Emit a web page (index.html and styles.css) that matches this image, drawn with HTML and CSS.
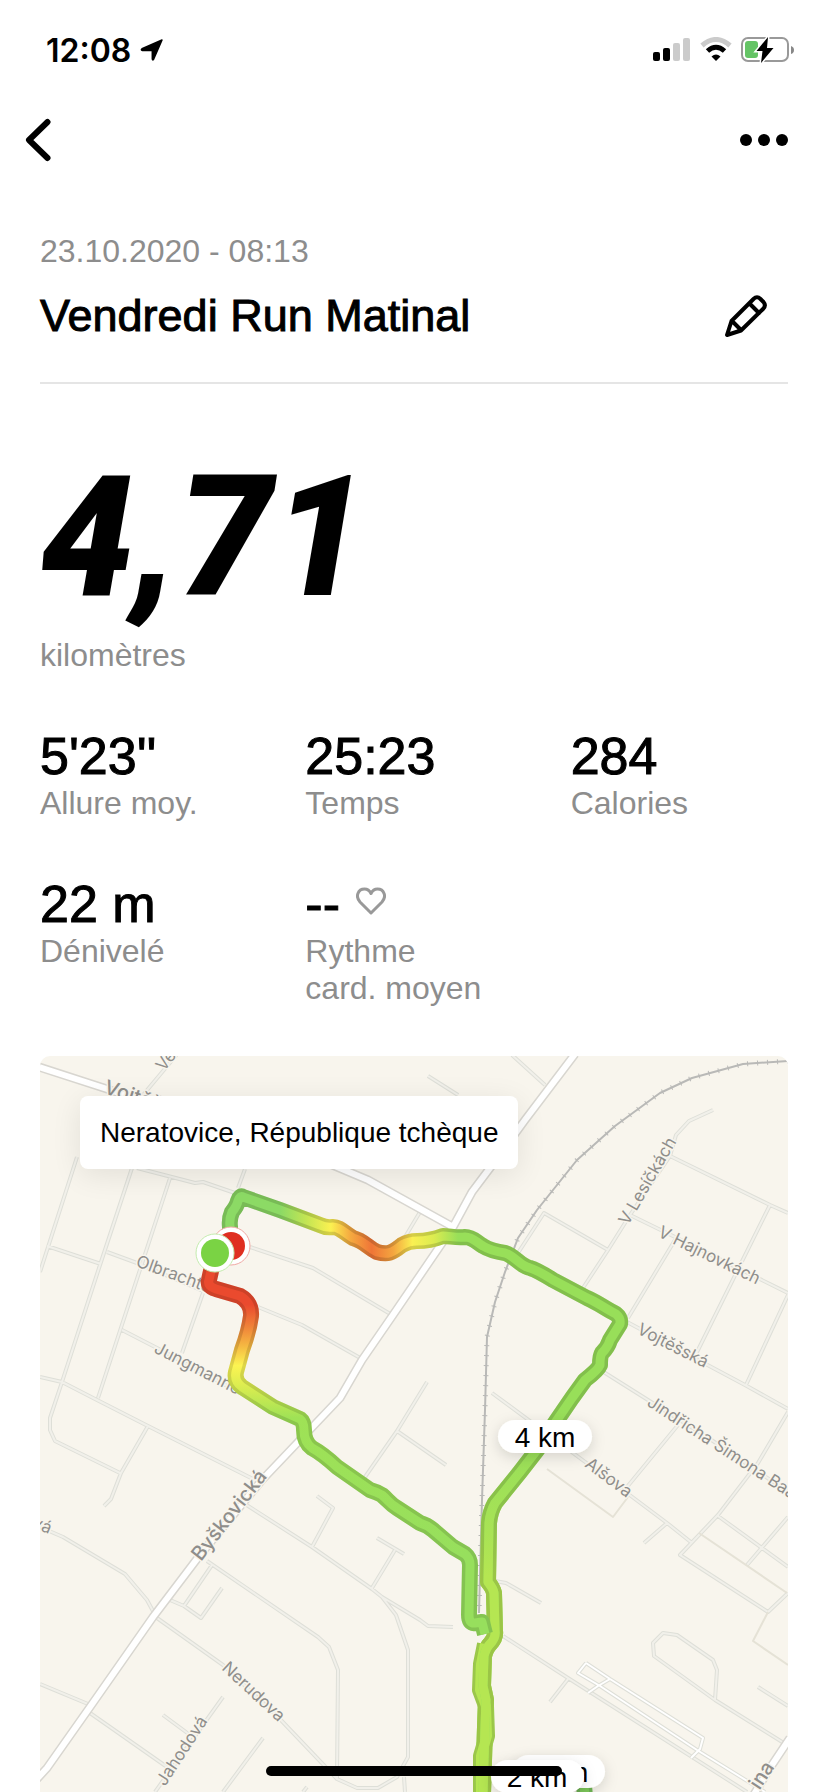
FILE: index.html
```
<!DOCTYPE html>
<html lang="fr">
<head>
    <meta charset="UTF-8">
    <meta name="viewport" content="width=device-width, initial-scale=1.0">
    <title>Vendredi Run Matinal</title>
    <link rel="stylesheet" href="styles.css">
</head>
<body>
    <div class="status-bar">
        <div class="status-time">
            <span>12:08</span>
            <svg width="24" height="22" viewBox="0 0 24 22" stroke="#000" stroke-width="1.500" stroke-linejoin="round"><path d="M22 1 13.500 20.500Q12.500 21.500 12.300 20V11.500H2.500Q.5 11 2 9.800z"/></svg>
        </div>
        <div class="status-icons">
            <svg width="38" height="26" viewBox="0 0 38 26">
                <rect x="0" y="15" width="7" height="9" rx="2"/>
                <rect x="10" y="11" width="7" height="13" rx="2"/>
                <rect x="20" y="6" width="7" height="18" rx="2" fill="#cbcbcb"/>
                <rect x="30" y="1" width="7" height="23" rx="2" fill="#cbcbcb"/>
            </svg>
            <svg width="32" height="26" viewBox="0 0 32 26" fill="none" stroke-width="5">
                <path d="M2 8.500Q16-3.500 30 8.500" stroke="#cbcbcb"/>
                <path d="M7.500 14Q16 6.500 24.500 14" stroke="#000"/>
                <path d="M11.500 19.500Q16 15.500 20.500 19.500L16 24z" fill="#000"/>
            </svg>
            <svg width="54" height="28" viewBox="0 0 54 28">
                <rect x="1" y="2" width="46" height="23" rx="6" fill="none" stroke="#999" stroke-width="2"/>
                <path d="M50 10q3 1 3 4t-3 4z" fill="#888"/>
                <rect x="4" y="5" width="13" height="17" rx="3" fill="#65c466"/>
                <path d="M27 1 15.500 15h6L20 27l12.500-15h-6.500z" stroke="#fff" stroke-width="3" paint-order="stroke"/>
            </svg>
        </div>
    </div>

    <header class="nav">
        <button type="button" class="icon-button" aria-label="Retour">
            <svg width="28" height="44" viewBox="0 0 28 44" fill="none" stroke="#000" stroke-width="6" stroke-linecap="round" stroke-linejoin="round"><path d="M23.500 4 5 22l18.500 18"/></svg>
        </button>
        <button type="button" class="icon-button" aria-label="Plus d'options">
            <svg width="48" height="12" viewBox="0 0 48 12"><circle cx="6" cy="6" r="6"/><circle cx="24" cy="6" r="6"/><circle cx="42" cy="6" r="6"/></svg>
        </button>
    </header>

    <main>
        <section class="run-header">
            <p class="label">23.10.2020 - 08:13</p>
            <div class="title-row">
                <h1>Vendredi Run Matinal</h1>
                <button type="button" class="icon-button" aria-label="Modifier le nom">
                    <svg width="44" height="44" viewBox="0 0 44 44" fill="none" stroke="#000" stroke-width="4" stroke-linecap="round" stroke-linejoin="round"><path d="M3 41 7.500 27 29.500 5Q33 1.500 36.500 5L39.500 8Q42.500 11.500 39 15L17 36.500zM25.500 9.500 35 19M8.500 27.500 17 36"/></svg>
                </button>
            </div>
        </section>

        <section class="distance">
            <p class="distance-value">4,71</p>
            <p class="label">kilomètres</p>
        </section>

        <section class="stats">
            <div><p class="value">5'23''</p><p class="label">Allure moy.</p></div>
            <div><p class="value">25:23</p><p class="label">Temps</p></div>
            <div><p class="value">284</p><p class="label">Calories</p></div>
            <div><p class="value">22 m</p><p class="label">Dénivelé</p></div>
            <div>
                <p class="value">
                    <span>--</span>
                    <svg width="30" height="34" viewBox="0 0 30 34" fill="none" stroke="#999" stroke-width="3" stroke-linejoin="round"><path d="M15 26 4 15C-1 9.500 2 2 8.500 2c3.200 0 5.300 2 6.500 4.500C16.200 4 18.300 2 21.500 2 28 2 31 9.500 26 15z"/></svg>
                </p>
                <p class="label">Rythme<br>card. moyen</p>
            </div>
        </section>

        <section class="map">
            <svg class="map-drawing" viewBox="0 0 748 736">
                <defs>
                    <path id="roads" d="M144-10 103 39M37 101 0 216M92 112 60 209 22 326 10 362V374L15 385 80 417M130 122 58 342M97 112 155 127 163 126 195 137M205 113 198 132M7 190 61 208M67 196 97 207 163 235M163 237 142 297M82 274 117 292 200 337M0 321 22 326 57 344 108 370 215 424M210 191 273 212 352 259M218 251 262 269 322 303M387 326 357 375 325 421M357 375 406 409M380 156 365 181M388 20 418 39M472-1 505 29M673 54 649 65 636 79 630 100 590 159 568 194 543 232M630 100 730 149 748 157M730 149 657 296M590 159 635 181 748 237M635 184 588 262M478 197 504 157 568 194M748 239 706 329M587 266 705 329 748 353M562 315 608 344 670 383 748 436M452 337 587 437 627 467 652 487M748 356 718 407 678 459 640 499 728 556 748 537M638 369 587 431M678 460 748 511M748 461 707 509M627 467 604 487M455 525 466 527 501 547M463 580 528 622 707 736M528 623 510 646M747 689 675 644 614 600 613 587 623 577 637 579 673 604 677 614 675 644M718 631 748 650M108 370 81 417 71 443 64 450M0 471 23 481 85 518 107 544 114 557M205 448 272 491 332 533 342 541 356 559 368 594V701L357 721 338 732H317L297 723 238 661 183 609 117 562M342 541 380 564 388 570 413 571M277 440 293 452 272 491M337 482 364 498M355 494 332 532M167 505 278 581 289 591 298 614 297 723M172 509 144 550M130 544 144 550 161 562 182 532M0 628 48 648M50 657 127 711M123 659 150 679M183 641 115 736M223 682 183 736M267 731 263 736M364 721 365 736"/>
                    <path id="main-roads" d="M-4 10 67 33 290 108 328 124 413 171M535-2 485 64 450 112 432 136 413 171 353 259 322 304 300 342 222 424 160 499 113 561 50 651 7 712-4 724M750 682 730 712 713 740"/>
                    <path id="tracks" d="M546 607 538 617 560 630 657 694 725 736M546 607 570 623 663 682 660 693 651 702M570 623 558 630 548 637"/>
                    <path id="railway" d="M748 5 703 8 652 22 620 37 575 70 537 104 497 154 478 182 465 216 455 246 447 281 445 354 442 444 439 557"/>
                    <path id="run-south" d="M445 588 441 608 440 634 446 650 447 680 441 700 441 740"/>
                    <path id="run-in" d="M443 738 445 671 446 644 443 630 444 600Q446 592 450 588 456 582 455 575L454 537Q453 532 448 526L449 467Q450 456 455 447L480 416 497 394 517 364 532 342 545 324Q558 314 560 309 560 300 562 297 568 291 570 284L580 268Q581 262 576 258C564 252 557 246 547 242L513 224Q497 214 490 212C480 210 475 200 465 197Q451 195 443 190C436 186 433 181 425 181 416 182 410 180 403 180Q390 185 377 185 369 185 362 189C352 197 348 199 337 196 327 191 324 185 313 182 304 177 300 171 293 171Q286 172 280 169L240 154 203 141Q200 139 198 145 197 150 192 156 189 163 190 171V190"/>
                    <path id="run-out" d="M175 197 169 224Q167 230 176 233L200 240Q212 247 211 260 209 275 202 294L196 316Q194 325 202 331L233 351 260 363Q264 366 264 374 264 386 272 392 283 398 297 411L330 434Q337 436 342 439C348 444 350 448 357 452L380 467Q387 469 393 474L413 491 425 498Q430 502 430 509L429 559Q429 568 435 567L442 566 445 578"/>
                    <linearGradient id="pace-out" gradientUnits="userSpaceOnUse" x1="0" y1="224" x2="0" y2="500">
                        <stop offset="0" stop-color="#ea4a2e"/>
                        <stop offset=".09" stop-color="#ea4a2e"/>
                        <stop offset=".17" stop-color="#f08339"/>
                        <stop offset=".24" stop-color="#f5b942"/>
                        <stop offset=".31" stop-color="#fcf452"/>
                        <stop offset=".39" stop-color="#d8ec50"/>
                        <stop offset=".5" stop-color="#9fe256"/>
                        <stop offset="1" stop-color="#97df5d"/>
                    </linearGradient>
                    <linearGradient id="pace-in" gradientUnits="userSpaceOnUse" x1="190" y1="0" x2="430" y2="0">
                        <stop offset="0" stop-color="#8cda65"/>
                        <stop offset=".21" stop-color="#8cda65"/>
                        <stop offset=".32" stop-color="#c4e553"/>
                        <stop offset=".42" stop-color="#fbf151"/>
                        <stop offset=".5" stop-color="#f5ab40"/>
                        <stop offset=".59" stop-color="#ef7537"/>
                        <stop offset=".68" stop-color="#f4a53f"/>
                        <stop offset=".76" stop-color="#faf052"/>
                        <stop offset=".85" stop-color="#dbec50"/>
                        <stop offset=".95" stop-color="#98df59"/>
                        <stop offset="1" stop-color="#98df59"/>
                    </linearGradient>
                    <linearGradient id="pace-south" gradientUnits="userSpaceOnUse" x1="0" y1="340" x2="0" y2="520">
                        <stop offset="0" stop-color="#98df59" stop-opacity="0"/>
                        <stop offset="1" stop-color="#b5e652"/>
                    </linearGradient>
                    <filter id="pill-shadow" x="-30%" y="-50%" width="160%" height="220%">
                        <feDropShadow dx="0" dy="4" stdDeviation="7" flood-opacity=".14"/>
                    </filter>
                </defs>

                <!-- Rues -->
                <use href="#roads" class="road-edge"/>
                <use href="#roads" class="road-fill"/>
                <use href="#tracks" class="road-edge"/>
                <use href="#tracks" class="track-fill"/>
                <path class="path-line" d="M507 413 573 461 588 441M659 477 747 537M728 556 713 585 748 609"/>
                <use href="#main-roads" class="main-edge"/>
                <use href="#main-roads" class="main-fill"/>
                <use href="#railway" class="rail"/>
                <use href="#railway" class="rail-ties"/>

                <!-- Noms des rues -->
                <g class="street">
                    <text transform="translate(124 16) rotate(-52)">Ve</text>
                    <text transform="translate(95 210) rotate(20)">Olbrachto</text>
                    <text transform="translate(113 296) rotate(27)">Jungmanno</text>
                    <text transform="translate(588 170) rotate(-60)">V Lesíčkách</text>
                    <text transform="translate(617 180) rotate(26)">V Hajnovkách</text>
                    <text transform="translate(596 277) rotate(27)">Vojtěšská</text>
                    <text transform="translate(606 349) rotate(33)">Jindřicha Šimona Baara</text>
                    <text transform="translate(544 410) rotate(37)">Alšova</text>
                    <text transform="translate(181 613) rotate(43)">Nerudova</text>
                    <text transform="translate(125 731) rotate(-57)">Jahodová</text>
                    <text transform="translate(9 478) rotate(22)" text-anchor="end">vá</text>
                    <g class="street-main">
                        <text transform="translate(63 37) rotate(18)">Vojtěšská</text>
                        <text transform="translate(161 506) rotate(-52)">Byškovická</text>
                        <text transform="translate(735 711) rotate(-57)" text-anchor="end">ina</text>
                    </g>
                </g>

                <!-- Parcours -->
                <g class="route">
                    <path d="M543 720 545 740" stroke="#72b957" stroke-width="16"/>
                    <path d="M543 720 545 740" stroke="#83d25f" stroke-width="9"/>
                    <use href="#run-south" stroke="#9bc64b" stroke-width="16"/>
                    <use href="#run-in" class="route-wide" stroke="url(#pace-in)"/>
                    <use href="#run-in" class="route-wide" stroke="url(#pace-south)"/>
                    <use href="#run-in" class="route-wide" stroke="#000" stroke-opacity=".14"/>
                    <use href="#run-south" stroke="#b5e652" stroke-width="10"/>
                    <use href="#run-in" class="route-core" stroke="url(#pace-in)"/>
                    <use href="#run-in" class="route-core" stroke="url(#pace-south)"/>
                    <use href="#run-out" class="route-wide" stroke="url(#pace-out)"/>
                    <use href="#run-out" class="route-wide" stroke="#000" stroke-opacity=".12"/>
                    <use href="#run-out" class="route-core" stroke="url(#pace-out)"/>
                </g>
                <circle cx="191" cy="190" r="19" fill="#fff" stroke="#f0a9a4"/>
                <circle cx="191" cy="190" r="14" fill="#df2f21"/>
                <circle cx="175" cy="197" r="19" fill="#fff" stroke="#c3ebae"/>
                <circle cx="175" cy="197" r="14" fill="#7ad344"/>

                <!-- Bornes kilométriques -->
                <g class="marker">
                    <rect x="458" y="364" width="94" height="33" rx="17"/>
                    <text x="505" y="391">4 km</text>
                    <rect x="472" y="699" width="93" height="33" rx="17"/>
                    <text x="518" y="726">3 km</text>
                    <rect x="451" y="704" width="93" height="33" rx="17"/>
                    <text x="497" y="731">2 km</text>
                </g>
            </svg>
            <p class="place">Neratovice, République tchèque</p>
        </section>
    </main>
    <div class="home-indicator"></div>
</body>
</html>
```
FILE: styles.css
```
/* Styles généraux */
* {
    box-sizing: border-box;
}

body {
    margin: 0;
    font-family: "Liberation Sans", Arial, sans-serif;
    color: #000;
    background-color: #fff;
}

p,
h1 {
    margin: 0;
}

svg {
    display: block;
}

.icon-button {
    padding: 0;
    border: none;
    background: none;
    cursor: pointer;
}

/* Barre d'état */
.status-bar {
    display: flex;
    justify-content: space-between;
    align-items: center;
    height: 100px;
    padding: 0 33px 0 46px;
}

.status-time {
    display: flex;
    align-items: center;
    gap: 9px;
    font-family: Inter, sans-serif;
    font-size: 32px;
    font-weight: 600;
}

.status-icons {
    display: flex;
    align-items: center;
    gap: 9px;
}

/* Navigation */
.nav {
    display: flex;
    justify-content: space-between;
    align-items: center;
    height: 80px;
    padding: 0 40px 0 24px;
}

main {
    padding: 53px 40px 0;
}

/* Titre de la course */
.label {
    font-size: 32px;
    line-height: 37px;
    color: #8d8d8d;
}

.run-header {
    padding-bottom: 40px;
    border-bottom: 2px solid #e5e5e5;
}

.title-row {
    display: flex;
    justify-content: space-between;
    align-items: center;
    margin-top: 20px;
    padding-right: 20px;
}

h1 {
    font-size: 45px;
    font-weight: normal;
    line-height: 52px;
    -webkit-text-stroke: 1px #000;
}

/* Distance */
.distance {
    padding-top: 74px;
}

.distance-value {
    margin-bottom: 19px;
    font-family: Roboto, sans-serif;
    font-size: 168px;
    font-style: italic;
    font-weight: 900;
    line-height: 160px;
}

/* Statistiques */
.stats {
    display: grid;
    grid-template-columns: repeat(3, 1fr);
    gap: 53px 48px;
    margin: 53px 0 49px;
}

.value {
    display: flex;
    align-items: center;
    gap: 16px;
    font-size: 52px;
    line-height: 58px;
    -webkit-text-stroke: 1px #000;
}

/* Carte */
.map {
    position: relative;
    overflow: hidden;
    border-radius: 10px 10px 0 0;
    background-color: #f8f5ed;
}

.map-drawing {
    width: 100%;
    fill: none;
    stroke-linejoin: round;
}

.place {
    position: absolute;
    top: 40px;
    left: 40px;
    padding: 0 20px;
    border-radius: 8px;
    background-color: #fff;
    box-shadow: 0 6px 30px rgba(0, 0, 0, 0.09);
    font-size: 28px;
    line-height: 73px;
}

.road-edge {
    stroke: #dedfd8;
    stroke-width: 4;
}

.road-fill {
    stroke: #f1f0ea;
    stroke-width: 2;
}

.track-fill {
    stroke: #fff;
    stroke-width: 2;
}

.path-line {
    stroke: #e5e2d6;
    stroke-width: 2;
}

.main-edge {
    stroke: #d8d6d0;
    stroke-width: 9;
}

.main-fill {
    stroke: #fff;
    stroke-width: 6;
}

.rail {
    stroke: #b9b9b7;
    stroke-width: 2;
}

.rail-ties {
    stroke: #b9b9b7;
    stroke-width: 5;
    stroke-dasharray: 1 9;
}

.street {
    fill: #8f8e8b;
    stroke: #f8f5ed;
    stroke-width: 3;
    paint-order: stroke;
    font-family: Inter, sans-serif;
    font-size: 17px;
}

.street-main {
    font-size: 20px;
    font-weight: 500;
}

.route {
    stroke-linejoin: round;
}

.route-wide {
    stroke-width: 16;
}

.route-core {
    stroke-width: 9;
}

.marker rect {
    fill: #fff;
    filter: url(#pill-shadow);
}

.marker text {
    fill: #000;
    font-size: 28px;
    text-anchor: middle;
}

.home-indicator {
    position: fixed;
    bottom: 16px;
    left: 50%;
    width: 296px;
    height: 10px;
    margin-left: -148px;
    border-radius: 5px;
    background-color: #000;
}
```
